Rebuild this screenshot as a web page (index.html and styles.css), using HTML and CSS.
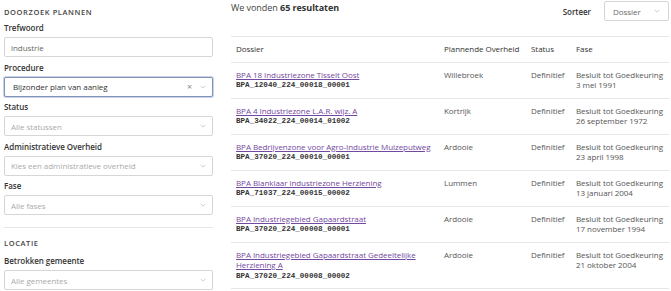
FILE: index.html
```html
<!DOCTYPE html>
<html>
<head>
  <title>Doorzoek plannen</title>
  <link rel="stylesheet" href="styles.css">
</head>
<body>
  <div class="page">
    <aside class="filters">
      <h2 class="section-title">DOORZOEK PLANNEN</h2>

      <div class="field">
        <label class="field-label">Trefwoord</label>
        <div class="input"><span class="value">industrie</span></div>
      </div>

      <div class="field">
        <label class="field-label">Procedure</label>
        <div class="input select focused">
          <span class="value dark">Bijzonder plan van aanleg</span>
          <span class="clear">&#215;</span>
          <svg class="chevron" viewBox="0 0 8 5"><path d="M1 1l3 3 3-3" fill="none" stroke="#b5b5b5" stroke-width="0.9"/></svg>
        </div>
      </div>

      <div class="field">
        <label class="field-label">Status</label>
        <div class="input select">
          <span class="value placeholder">Alle statussen</span>
          <svg class="chevron" viewBox="0 0 8 5"><path d="M1 1l3 3 3-3" fill="none" stroke="#b5b5b5" stroke-width="0.9"/></svg>
        </div>
      </div>

      <div class="field">
        <label class="field-label">Administratieve Overheid</label>
        <div class="input select">
          <span class="value placeholder">Kies een administratieve overheid</span>
          <svg class="chevron" viewBox="0 0 8 5"><path d="M1 1l3 3 3-3" fill="none" stroke="#b5b5b5" stroke-width="0.9"/></svg>
        </div>
      </div>

      <div class="field">
        <label class="field-label">Fase</label>
        <div class="input select">
          <span class="value placeholder">Alle fases</span>
          <svg class="chevron" viewBox="0 0 8 5"><path d="M1 1l3 3 3-3" fill="none" stroke="#b5b5b5" stroke-width="0.9"/></svg>
        </div>
      </div>

      <hr class="divider">

      <h2 class="section-title loc">LOCATIE</h2>

      <div class="field">
        <label class="field-label">Betrokken gemeente</label>
        <div class="input select">
          <span class="value placeholder">Alle gemeentes</span>
          <svg class="chevron" viewBox="0 0 8 5"><path d="M1 1l3 3 3-3" fill="none" stroke="#b5b5b5" stroke-width="0.9"/></svg>
        </div>
      </div>
    </aside>

    <main class="results">
      <div class="results-head">
        <div class="count">We vonden <b>65 resultaten</b></div>
        <div class="sort">
          <span class="sort-label">Sorteer</span>
          <div class="input select sort-select">
            <span class="value">Dossier</span>
            <svg class="chevron" viewBox="0 0 8 5"><path d="M1 1l3 3 3-3" fill="none" stroke="#b5b5b5" stroke-width="0.9"/></svg>
          </div>
        </div>
      </div>

      <table class="result-table">
        <colgroup>
          <col style="width:208px">
          <col style="width:87px">
          <col style="width:45px">
          <col>
        </colgroup>
        <thead>
          <tr>
            <th>Dossier</th>
            <th>Plannende Overheid</th>
            <th>Status</th>
            <th>Fase</th>
          </tr>
        </thead>
        <tbody>
          <tr>
            <td><a href="#">BPA 18 Industriezone Tisselt Oost</a><code>BPA_12040_224_00018_00001</code></td>
            <td>Willebroek</td>
            <td>Definitief</td>
            <td>Besluit tot Goedkeuring<br>3 mei 1991</td>
          </tr>
          <tr>
            <td><a href="#">BPA 4 Industriezone L.A.R. wijz. A</a><code>BPA_34022_224_00014_01002</code></td>
            <td>Kortrijk</td>
            <td>Definitief</td>
            <td>Besluit tot Goedkeuring<br>26 september 1972</td>
          </tr>
          <tr>
            <td><a href="#">BPA Bedrijvenzone voor Agro-Industrie Muizeputweg</a><code>BPA_37020_224_00010_00001</code></td>
            <td>Ardooie</td>
            <td>Definitief</td>
            <td>Besluit tot Goedkeuring<br>23 april 1998</td>
          </tr>
          <tr>
            <td><a href="#">BPA Blanklaar industriezone Herziening</a><code>BPA_71037_224_00015_00002</code></td>
            <td>Lummen</td>
            <td>Definitief</td>
            <td>Besluit tot Goedkeuring<br>13 januari 2004</td>
          </tr>
          <tr>
            <td><a href="#">BPA Industriegebied Gapaardstraat</a><code>BPA_37020_224_00008_00001</code></td>
            <td>Ardooie</td>
            <td>Definitief</td>
            <td>Besluit tot Goedkeuring<br>17 november 1994</td>
          </tr>
          <tr>
            <td><a href="#">BPA Industriegebied Gapaardstraat Gedeeltelijke Herziening A</a><code>BPA_37020_224_00008_00002</code></td>
            <td>Ardooie</td>
            <td>Definitief</td>
            <td>Besluit tot Goedkeuring<br>21 oktober 2004</td>
          </tr>
        </tbody>
      </table>
    </main>
  </div>
</body>
</html>
```

FILE: styles.css
```css
* {box-sizing: border-box}
body {
  margin: 0;
  background: #fff;
  font-family: "Open Sans", "Noto Sans", sans-serif;
  font-size: 8px;
  letter-spacing: -0.05px;
  color: #555;
}
.page {
  display: flex;
  gap: 18px;
  padding: 0 2px 0 4px;
}
.filters {
  width: 209px;
  flex: none;
  padding-top: 6px;
}
.section-title {
  margin: 0 0 4px 0;
  font-size: 7.5px;
  line-height: 12px;
  font-weight: 600;
  letter-spacing: 0.6px;
  color: #444;
}
.section-title.loc {
  margin-bottom: 6px;
}
.field {
  margin-bottom: 4.5px;
}
.field-label {
  display: block;
  line-height: 12px;
  margin-bottom: 3px;
  font-weight: 600;
  color: #333;
}
.input {
  height: 20px;
  border: 1px solid #d6d6d6;
  border-radius: 2px;
  background: #fff;
  display: flex;
  align-items: center;
  padding: 0 6px;
}
.input .value {
  flex: 1;
  color: #666;
  white-space: nowrap;
  overflow: hidden;
}
.input .value.dark {
  color: #333;
}
.input .value.placeholder {
  color: #aaa;
}
.input.focused {
  border-color: #8193b8;
  box-shadow: 0 0 0 1px #c9d2e6;
  padding-left: 8px;
}
.clear {
  color: #888;
  font-size: 9px;
  margin-right: 8px;
}
.chevron {
  width: 6px;
  height: 4px;
  flex: none;
}
.divider {
  border: none;
  border-top: 1px solid #e6e6e6;
  margin: 12px 0 9px 0;
}
.results {
  flex: 1;
}
.results-head {
  display: flex;
  justify-content: space-between;
  align-items: flex-start;
  height: 36px;
  padding-top: 1px;
}
.count {
  font-size: 9px;
  line-height: 14px;
  color: #444;
}
.count b {
  font-weight: 700;
  color: #333;
}
.sort {
  display: flex;
  align-items: center;
  gap: 13px;
}
.sort-label {
  font-weight: 600;
  color: #333;
}
.sort-select {
  width: 65px;
  padding: 0 8px;
}
.result-table {
  width: 100%;
  border-collapse: collapse;
  table-layout: fixed;
  border-top: 1px solid #e6e6e6;
}
.result-table th,
.result-table td {
  text-align: left;
  vertical-align: top;
  padding: 7px 5px;
  line-height: 10.5px;
  border-bottom: 1px solid #e6e6e6;
}
.result-table td:last-child {
  white-space: nowrap;
  padding-right: 0;
}
.result-table th {
  font-weight: 400;
  color: #333;
}
.result-table td {
  color: #555;
}
.result-table a {
  color: #7348a0;
  text-decoration: underline;
}
.result-table code {
  display: block;
  font-family: "Liberation Mono", monospace;
  font-weight: 700;
  font-size: 7.6px;
  letter-spacing: 0;
  color: #333;
}
```
